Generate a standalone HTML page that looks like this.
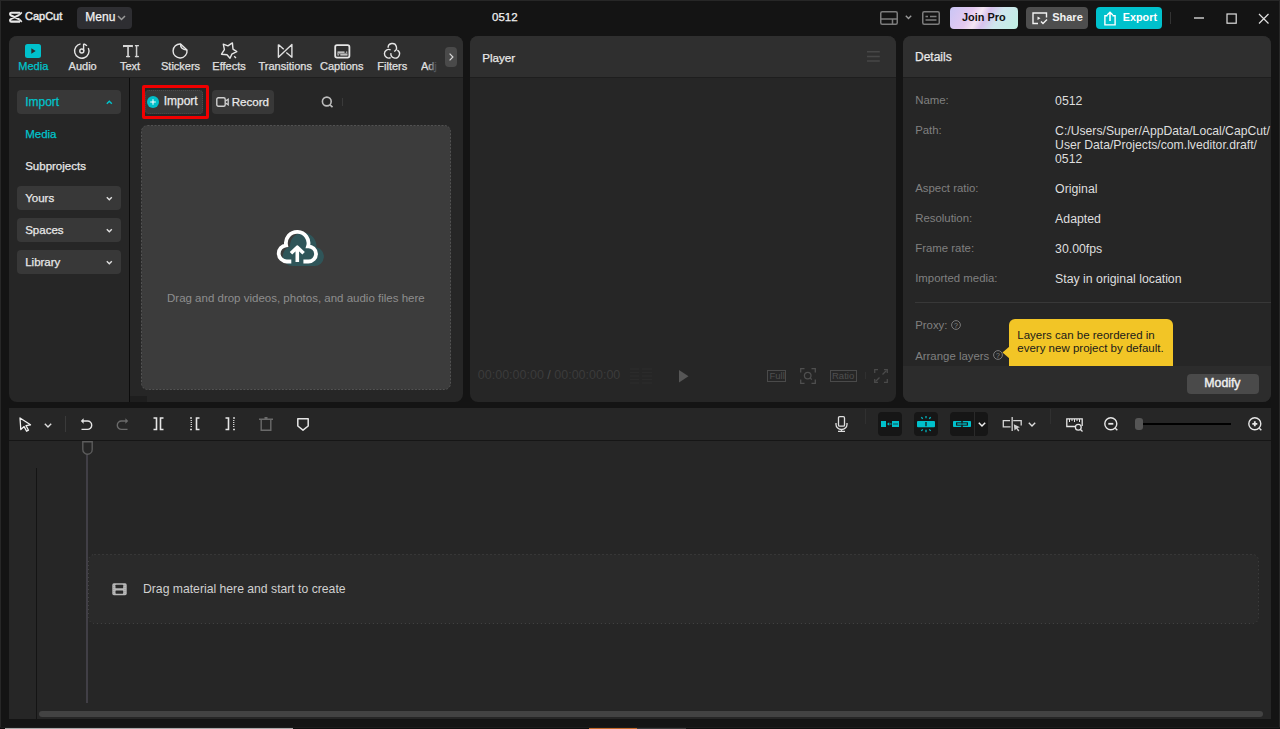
<!DOCTYPE html>
<html><head><meta charset="utf-8">
<style>
*{margin:0;padding:0;box-sizing:border-box}
html,body{width:1280px;height:729px;overflow:hidden;background:#141414;font-family:"Liberation Sans",sans-serif;color:#e0e0e0}
body{position:relative}
.a{position:absolute}
.t{position:absolute;white-space:nowrap;line-height:1}
svg{position:absolute;overflow:visible}
.med{-webkit-text-stroke:0.25px currentColor}
</style></head><body>
<div class="a" style="left:0px;top:0px;width:1280px;height:1px;background:#272727;"></div>
<div class="a" style="left:0px;top:0px;width:1px;height:728px;background:#272727;"></div>
<div class="a" style="left:1279px;top:0px;width:1px;height:728px;background:#272727;"></div>
<div class="a" style="left:0px;top:727px;width:1280px;height:1px;background:#1c1c1c;"></div>
<div class="a" style="left:0px;top:728px;width:1280px;height:1px;background:#0e0e0e;"></div>
<div class="a" style="left:5px;top:728px;width:288px;height:1px;background:#a8a8a8;"></div>
<div class="a" style="left:589px;top:728px;width:48px;height:1px;background:#c46a2a;"></div>
<div class="a" style="left:637px;top:728px;width:49px;height:1px;background:#3a3a3a;"></div>
<svg style="left:9px;top:11px;" width="14" height="12" viewBox="0 0 14 12"><path d="M11 1.8 H2.3 Q1.1 1.8 1.1 3 V3.3 Q1.1 4.1 2.1 4.5 L10.3 8.3 M10.3 3.9 L2.1 7.9 Q1.1 8.3 1.1 9.1 V9.4 Q1.1 10.6 2.3 10.6 H11" fill="none" stroke="#e8e8e8" stroke-width="2.1"/><path d="M10.3 3.9 L12.8 1.4 M10.3 8.3 L12.8 10.8" stroke="#e8e8e8" stroke-width="1.7"/></svg>
<div class="t " style="left:25px;top:11px;font-size:11px;color:#e8e8e8;font-weight:400;-webkit-text-stroke:0.45px #e8e8e8">CapCut</div>
<div class="a" style="left:77px;top:7px;width:55px;height:22px;background:#2e2e32;border-radius:4px"></div>
<div class="t med" style="left:85.3px;top:11px;font-size:12px;color:#f2f2f2;font-weight:400;">Menu</div>
<svg style="left:117px;top:15px;" width="9" height="6" viewBox="0 0 9 6"><path d="M1 1 L4.5 4.5 L8 1" fill="none" stroke="#9a9a9a" stroke-width="1.5"/></svg>
<div class="t med" style="left:492px;top:12px;font-size:11.5px;color:#f2f2f2;font-weight:400;">0512</div>
<svg style="left:880px;top:11px;" width="18" height="14" viewBox="0 0 18 14"><rect x="0.75" y="0.75" width="16.5" height="12.5" rx="1.5" fill="none" stroke="#7c7c7c" stroke-width="1.5"/><path d="M0.75 8 H17.25 M12.5 8 V13.25" stroke="#7c7c7c" stroke-width="1.5"/></svg>
<svg style="left:904.5px;top:14.5px;" width="7" height="5" viewBox="0 0 7 5"><path d="M0.8 0.8 L3.5 3.5 L6.2 0.8" fill="none" stroke="#9a9a9a" stroke-width="1.4"/></svg>
<svg style="left:922px;top:11px;" width="18" height="14" viewBox="0 0 18 14"><rect x="0.75" y="0.75" width="16.5" height="12.5" rx="1.5" fill="none" stroke="#7c7c7c" stroke-width="1.5"/><path d="M3.5 5.5 H6 M8 5.5 H14.5 M3.5 9 H14.5" stroke="#7c7c7c" stroke-width="1.5"/></svg>
<div class="a" style="left:950px;top:7px;width:68px;height:22px;background:linear-gradient(120deg,#c9c5f5 0%,#e4c9f0 30%,#f4e6f4 42%,#d8c2ee 52%,#cfe6ee 68%,#bff0e3 100%);border-radius:4px"></div>
<div class="t " style="left:962px;top:12px;font-size:10.9px;color:#111111;font-weight:700;">Join Pro</div>
<div class="a" style="left:1026px;top:7px;width:62px;height:22px;background:#4e4e4e;border-radius:4px"></div>
<svg style="left:1032px;top:12px;" width="17" height="13" viewBox="0 0 17 13"><path d="M6 11.5 H1 V1 H14.5 V5.5" fill="none" stroke="#f2f2f2" stroke-width="1.4"/><path d="M5.5 4.5 L8.5 6.3 L5.5 8.1 Z" fill="#f2f2f2"/><path d="M9 9.5 L11 11.5 L15 7.5" fill="none" stroke="#f2f2f2" stroke-width="1.4"/></svg>
<div class="t " style="left:1052.2px;top:12px;font-size:11px;color:#f2f2f2;font-weight:700;">Share</div>
<div class="a" style="left:1096px;top:7px;width:66px;height:22px;background:#00c1cc;border-radius:4px"></div>
<svg style="left:1104px;top:10.5px;" width="12" height="15" viewBox="0 0 12 15"><path d="M3.5 4.8 H0.9 V13.9 H11.1 V4.8 H8.5" fill="none" stroke="#ffffff" stroke-width="1.4"/><path d="M6 10 V1.5 M3.2 4 L6 1.2 L8.8 4" fill="none" stroke="#ffffff" stroke-width="1.5"/></svg>
<div class="t " style="left:1122.8px;top:12px;font-size:10.8px;color:#ffffff;font-weight:700;">Export</div>
<div class="a" style="left:1170px;top:12px;width:1px;height:12px;background:#333333;"></div>
<div class="a" style="left:1194px;top:17px;width:10px;height:2px;background:#9a9a9a;"></div>
<svg style="left:1225.5px;top:12.5px;" width="11" height="11" viewBox="0 0 11 11"><rect x="1" y="1" width="9.2" height="9.2" fill="none" stroke="#e0e0e0" stroke-width="1.2"/></svg>
<svg style="left:1257.5px;top:12.5px;" width="11" height="11" viewBox="0 0 11 11"><path d="M1 1 L10.5 10.5 M10.5 1 L1 10.5" stroke="#e0e0e0" stroke-width="1.2"/></svg>
<div class="a" style="left:9px;top:36px;width:454px;height:366px;background:#262626;border-radius:8px;overflow:hidden">
<div class="a" style="left:0px;top:0px;width:454px;height:41px;background:#2f2f2f;"></div>
<div class="a" style="left:0px;top:41px;width:454px;height:1px;background:#1e1e1e;"></div>
</div>
<div class="a" style="left:25px;top:44px;width:16px;height:14px;background:#00c1cc;border-radius:2.5px"></div>
<svg style="left:25px;top:44px;" width="16" height="14" viewBox="0 0 16 14"><path d="M6.3 4.3 L10.7 7 L6.3 9.7 Z" fill="#2b2b2b"/></svg>
<div class="t med" style="left:18.3px;top:61px;font-size:11px;color:#00c4cc;font-weight:400;">Media</div>
<svg style="left:74px;top:43px;" width="16" height="16" viewBox="0 0 16 16"><path d="M6.55 0.91 A7.2 7.2 0 1 0 14.33 4.96" fill="none" stroke="#e6e6e6" stroke-width="1.4"/><path d="M9.6 0.85 A7.2 7.2 0 0 1 12.9 2.9" fill="none" stroke="#e6e6e6" stroke-width="1.4"/><path d="M9.6 0.85 V8" fill="none" stroke="#e6e6e6" stroke-width="1.4"/><circle cx="7.8" cy="8" r="2" fill="none" stroke="#e6e6e6" stroke-width="1.4"/></svg>
<div class="t med" style="left:68.6px;top:61px;font-size:11px;color:#e0e0e0;font-weight:400;">Audio</div>
<svg style="left:122px;top:44px;" width="18" height="14" viewBox="0 0 18 14"><g fill="#d6d6d6"><path d="M1 1 H10.9 V3.4 L10.2 2.9 H1.7 L1 3.4 Z"/><rect x="5.1" y="2.9" width="1.9" height="10.3" fill="#bdbdbd"/><rect x="4" y="11.9" width="4.1" height="1.3"/><rect x="13.8" y="1" width="1.5" height="12.2" fill="#cfcfcf"/><rect x="12.9" y="1" width="4" height="1.3"/><rect x="12.9" y="11.9" width="4" height="1.3"/></g></svg>
<div class="t med" style="left:120px;top:61px;font-size:11px;color:#e0e0e0;font-weight:400;">Text</div>
<svg style="left:172px;top:43px;" width="17" height="16" viewBox="0 0 17 16"><path d="M8.6 1 A7 7 0 1 0 15 7 Z" fill="none" stroke="#e6e6e6" stroke-width="1.4" stroke-linejoin="round"/><path d="M8.6 1 Q8.2 6.6 15 7" fill="none" stroke="#e6e6e6" stroke-width="1.4"/></svg>
<div class="t med" style="left:161px;top:61px;font-size:11px;color:#e0e0e0;font-weight:400;">Stickers</div>
<svg style="left:221px;top:42px;" width="17" height="17" viewBox="0 0 17 17"><path d="M2.3 2.2 L6.9 3.9 L11.4 0.9 L12 7.1 L15.8 9.6 L10.8 12.2 L9 16.3 L6 12.8 L0.5 12.2 L3.4 7.7 Z" fill="none" stroke="#e6e6e6" stroke-width="1.4" stroke-linejoin="round"/><path d="M13.2 14.2 L15 16" stroke="#e6e6e6" stroke-width="1.3"/></svg>
<div class="t med" style="left:212.3px;top:61px;font-size:11px;color:#e0e0e0;font-weight:400;">Effects</div>
<svg style="left:277px;top:43px;" width="16" height="16" viewBox="0 0 16 16"><path d="M1.4 1.5 V14.2 L14.9 1.5 V14.2 L9.3 9.5 M1.4 1.5 L6.7 6.2" fill="none" stroke="#e0e0e0" stroke-width="1.4" stroke-linejoin="round"/></svg>
<div class="t med" style="left:258.5px;top:61px;font-size:11px;color:#e0e0e0;font-weight:400;">Transitions</div>
<svg style="left:333.5px;top:43.5px;" width="17" height="15" viewBox="0 0 17 15"><rect x="1.2" y="1.2" width="14.2" height="12.4" rx="1.8" fill="none" stroke="#e6e6e6" stroke-width="1.8"/><rect x="3" y="8.8" width="10.5" height="1.5" fill="#8a8a8a"/><path d="M3.5 8.2 H10.5 M12.2 8.2 H13.2 M3.5 10.9 H4.8 M6.3 10.9 H13.5" stroke="#e6e6e6" stroke-width="1.2"/></svg>
<div class="t med" style="left:320px;top:61px;font-size:11px;color:#e0e0e0;font-weight:400;">Captions</div>
<svg style="left:384px;top:43px;" width="17" height="17" viewBox="0 0 17 17"><path d="M4.1 4.7 A4.2 4.2 0 1 1 10.14 8.47" fill="none" stroke="#e6e6e6" stroke-width="1.4"/><path d="M6.63 6.89 A4.3 4.3 0 1 0 6.63 14.6" fill="none" stroke="#e6e6e6" stroke-width="1.4"/><path d="M6.95 10.08 A4.3 4.3 0 1 0 13.35 7.03" fill="none" stroke="#e6e6e6" stroke-width="1.4"/></svg>
<div class="t med" style="left:377.3px;top:61px;font-size:11px;color:#e0e0e0;font-weight:400;">Filters</div>
<div class="a" style="left:421px;top:58px;width:20px;height:16px;overflow:hidden">
<div class="t med" style="left:0px;top:3px;font-size:11px;color:#e0e0e0;font-weight:400;">Adjustment</div>
</div>
<div class="a" style="left:428px;top:58px;width:17px;height:16px;background:linear-gradient(90deg,rgba(47,47,47,0),#2f2f2f 55%);"></div>
<div class="a" style="left:445px;top:47px;width:12px;height:20px;background:#4a4a4a;border-radius:4px"></div>
<svg style="left:447px;top:52px;" width="8" height="10" viewBox="0 0 8 10"><path d="M2.6 1.7 L5.9 5 L2.6 8.3" fill="none" stroke="#d8d8d8" stroke-width="1.2"/></svg>
<div class="a" style="left:129px;top:78px;width:1px;height:324px;background:#0c0c0c;"></div>
<div class="a" style="left:130px;top:396px;width:17px;height:6px;background:#1e1e1e;"></div>
<div class="a" style="left:17px;top:90px;width:104px;height:24px;background:#383838;border-radius:4px"></div>
<div class="t med" style="left:25.2px;top:96px;font-size:12px;color:#00c4cc;font-weight:400;">Import</div>
<svg style="left:105.5px;top:99.5px;" width="7" height="5" viewBox="0 0 7 5"><path d="M0.8 3.8 L3.3 1.2 L5.8 3.8" fill="none" stroke="#00c4cc" stroke-width="1.4"/></svg>
<div class="t med" style="left:25.2px;top:129px;font-size:11.5px;color:#00c4cc;font-weight:400;">Media</div>
<div class="t med" style="left:25.2px;top:161px;font-size:11.5px;color:#e8e8e8;font-weight:400;">Subprojects</div>
<div class="a" style="left:17px;top:186px;width:104px;height:24px;background:#383838;border-radius:4px"></div>
<div class="t med" style="left:25.2px;top:193px;font-size:11.5px;color:#e8e8e8;font-weight:400;">Yours</div>
<svg style="left:105.5px;top:195.5px;" width="7" height="5" viewBox="0 0 7 5"><path d="M0.8 1.2 L3.3 3.8 L5.8 1.2" fill="none" stroke="#e0e0e0" stroke-width="1.4"/></svg>
<div class="a" style="left:17px;top:218px;width:104px;height:24px;background:#383838;border-radius:4px"></div>
<div class="t med" style="left:25.2px;top:225px;font-size:11.5px;color:#e8e8e8;font-weight:400;">Spaces</div>
<svg style="left:105.5px;top:227.5px;" width="7" height="5" viewBox="0 0 7 5"><path d="M0.8 1.2 L3.3 3.8 L5.8 1.2" fill="none" stroke="#e0e0e0" stroke-width="1.4"/></svg>
<div class="a" style="left:17px;top:250px;width:104px;height:24px;background:#383838;border-radius:4px"></div>
<div class="t med" style="left:25.2px;top:257px;font-size:11.5px;color:#e8e8e8;font-weight:400;">Library</div>
<svg style="left:105.5px;top:259.5px;" width="7" height="5" viewBox="0 0 7 5"><path d="M0.8 1.2 L3.3 3.8 L5.8 1.2" fill="none" stroke="#e0e0e0" stroke-width="1.4"/></svg>
<div class="a" style="left:145px;top:90px;width:58px;height:24px;background:#383838;border-radius:4px;outline:1px dotted #4c4c4c;outline-offset:-1px"></div>
<svg style="left:146.5px;top:95.8px;" width="12" height="12" viewBox="0 0 12 12"><circle cx="6" cy="6" r="6" fill="#00bfca"/><path d="M6 3.2 V8.8 M3.2 6 H8.8" stroke="#ffffff" stroke-width="1.05"/></svg>
<div class="t med" style="left:163.7px;top:95px;font-size:12px;color:#eaeaea;font-weight:400;">Import</div>
<div class="a" style="left:142px;top:85px;width:67px;height:34px;background:transparent;border:3px solid #f00000;border-radius:2px"></div>
<div class="a" style="left:212px;top:90px;width:62px;height:24px;background:#383838;border-radius:4px"></div>
<svg style="left:216px;top:97px;" width="13" height="10" viewBox="0 0 13 10"><rect x="0.8" y="0.8" width="8.4" height="8.4" rx="1.5" fill="none" stroke="#cfcfcf" stroke-width="1.4"/><path d="M9.5 4 L12.2 2.2 V7.8 L9.5 6" fill="none" stroke="#cfcfcf" stroke-width="1.3"/></svg>
<div class="t med" style="left:231.7px;top:96px;font-size:11.6px;color:#eaeaea;font-weight:400;">Record</div>
<svg style="left:321px;top:96px;" width="13" height="12" viewBox="0 0 13 12"><circle cx="5.8" cy="5.5" r="4.4" fill="none" stroke="#bdbdbd" stroke-width="1.6"/><path d="M9 8.8 L11.5 11.2" stroke="#bdbdbd" stroke-width="1.6"/></svg>
<div class="a" style="left:342px;top:98px;width:1px;height:8px;background:#3a3a3a;"></div>
<svg style="left:141px;top:125px;" width="310" height="265" viewBox="0 0 310 265"><rect x="0.5" y="0.5" width="309" height="264" rx="6" fill="#3c3c3c" stroke="#525252" stroke-width="1" stroke-dasharray="2 1.5"/></svg>
<svg style="left:276px;top:229px;" width="50" height="40" viewBox="0 0 50 40"><path d="M16.80 37.10 A10 10 0 0 1 14.02 17.49 A13.2 13.2 0 1 1 40.32 18.30 A9.5 9.5 0 0 1 38.40 37.10 Z" fill="#2f5559"/><path d="M15.30 32.50 H10.80 A8.1 8.1 0 0 1 10.12 16.33 A11.3 11.3 0 1 1 32.03 17.31 A7.6 7.6 0 1 1 32.40 32.50 H27.40" fill="none" stroke="#ffffff" stroke-width="3.8"/><path d="M21.3 33 V19 M15 24.2 L21.3 18.2 L27.6 24.2" fill="none" stroke="#ffffff" stroke-width="3.6" stroke-linejoin="round"/></svg>
<div class="t " style="left:167px;top:293px;font-size:11.5px;color:#8e8e8e;font-weight:400;">Drag and drop videos, photos, and audio files here</div>
<div class="a" style="left:470px;top:36px;width:426px;height:366px;background:#262626;border-radius:8px;overflow:hidden">
<div class="a" style="left:0px;top:0px;width:426px;height:41px;background:#2f2f2f;"></div>
<div class="a" style="left:0px;top:41px;width:426px;height:1px;background:#1e1e1e;"></div>
</div>
<div class="t med" style="left:482.2px;top:52px;font-size:11.6px;color:#e8e8e8;font-weight:400;">Player</div>
<svg style="left:866.5px;top:50.8px;" width="13" height="11" viewBox="0 0 13 11"><path d="M0 0.8 H12.8 M0 5.5 H12.8 M0 10.1 H12.8" stroke="#474747" stroke-width="1.5"/></svg>
<div class="t " style="left:477.8px;top:369px;font-size:12.5px;color:#3b3b3b;font-weight:400;">00:00:00:00 <span style="color:#4a4a4a">/</span> 00:00:00:00</div>
<svg style="left:630px;top:368px;" width="22" height="16" viewBox="0 0 22 16"><path d="M0 1 H9 M0 4.5 H9 M0 8 H9 M0 11.5 H9 M0 15 H9 M12 1 H22 M12 4.5 H22 M12 8 H22 M12 11.5 H22 M12 15 H22" stroke="#2b2b2b" stroke-width="1.6"/></svg>
<svg style="left:679px;top:369.5px;" width="10" height="13" viewBox="0 0 10 13"><path d="M0 0 L9.5 6.3 L0 12.6 Z" fill="#565656"/></svg>
<svg style="left:767px;top:370px;" width="19" height="12" viewBox="0 0 19 12"><rect x="0.5" y="0.5" width="18" height="11" fill="none" stroke="#4a4a4a" stroke-width="1"/></svg>
<div class="t " style="left:769.5px;top:371px;font-size:9.5px;color:#4f4f4f;font-weight:400;">Full</div>
<svg style="left:800px;top:368px;" width="16" height="16" viewBox="0 0 16 16"><path d="M0.7 4.5 V0.7 H4.5 M11.5 0.7 H15.3 V4.5 M15.3 11.5 V15.3 H11.5 M4.5 15.3 H0.7 V11.5" fill="none" stroke="#4f4f4f" stroke-width="1.3"/><circle cx="7.7" cy="7.6" r="3.3" fill="none" stroke="#4f4f4f" stroke-width="1.3"/><path d="M10.2 10 L11.8 11.6" stroke="#4f4f4f" stroke-width="1.3"/></svg>
<svg style="left:830px;top:370px;" width="27" height="12" viewBox="0 0 27 12"><rect x="0.5" y="0.5" width="26" height="11" fill="none" stroke="#4a4a4a" stroke-width="1"/></svg>
<div class="t " style="left:832px;top:371px;font-size:9.5px;color:#4f4f4f;font-weight:400;">Ratio</div>
<div class="a" style="left:865px;top:372px;width:1px;height:7px;background:#303030;"></div>
<svg style="left:874px;top:369px;" width="14" height="14" viewBox="0 0 14 14"><path d="M0.7 4 V0.7 H4 M10 0.7 H13.3 V4 M13.3 10 V13.3 H10 M4 13.3 H0.7 V10" fill="none" stroke="#4a4a4a" stroke-width="1.3"/><path d="M12.5 1.5 L8.5 5.5 M1.5 12.5 L5.5 8.5" stroke="#4a4a4a" stroke-width="1.3"/></svg>
<div class="a" style="left:903px;top:36px;width:368px;height:366px;background:#262626;border-radius:8px;overflow:hidden">
<div class="a" style="left:0px;top:0px;width:368px;height:41px;background:#2f2f2f;"></div>
<div class="a" style="left:0px;top:41px;width:368px;height:1px;background:#1e1e1e;"></div>
<div class="a" style="left:0px;top:330px;width:368px;height:36px;background:#2c2c2c;"></div>
</div>
<div class="t med" style="left:915px;top:51px;font-size:12px;color:#e8e8e8;font-weight:400;">Details</div>
<div class="t " style="left:915.2px;top:95px;font-size:11.4px;color:#808080;font-weight:400;">Name:</div>
<div class="t " style="left:1055.1px;top:95px;font-size:12.3px;color:#dedede;font-weight:400;">0512</div>
<div class="t " style="left:915.2px;top:125px;font-size:11.4px;color:#808080;font-weight:400;">Path:</div>
<div class="t " style="left:1055.1px;top:125px;font-size:12.2px;color:#dedede;font-weight:400;">C:/Users/Super/AppData/Local/CapCut/</div>
<div class="t " style="left:1055.1px;top:139px;font-size:12.2px;color:#dedede;font-weight:400;">User Data/Projects/com.lveditor.draft/</div>
<div class="t " style="left:1055.1px;top:153px;font-size:12.2px;color:#dedede;font-weight:400;">0512</div>
<div class="t " style="left:915.2px;top:183px;font-size:11.4px;color:#808080;font-weight:400;">Aspect ratio:</div>
<div class="t " style="left:1055.1px;top:183px;font-size:12.3px;color:#dedede;font-weight:400;">Original</div>
<div class="t " style="left:915.2px;top:213px;font-size:11.4px;color:#808080;font-weight:400;">Resolution:</div>
<div class="t " style="left:1055.1px;top:213px;font-size:12.3px;color:#dedede;font-weight:400;">Adapted</div>
<div class="t " style="left:915.2px;top:243px;font-size:11.4px;color:#808080;font-weight:400;">Frame rate:</div>
<div class="t " style="left:1055.1px;top:243px;font-size:12.3px;color:#dedede;font-weight:400;">30.00fps</div>
<div class="t " style="left:915.2px;top:273px;font-size:11.4px;color:#808080;font-weight:400;">Imported media:</div>
<div class="t " style="left:1055.1px;top:273px;font-size:12.3px;color:#dedede;font-weight:400;">Stay in original location</div>
<div class="a" style="left:915px;top:302px;width:356px;height:1px;background:#383838;"></div>
<div class="t " style="left:915.2px;top:320px;font-size:11.4px;color:#808080;font-weight:400;">Proxy:</div>
<svg style="left:951px;top:320.3px;" width="10" height="10" viewBox="0 0 10 10"><circle cx="5" cy="5" r="4.4" fill="none" stroke="#7a7a7a" stroke-width="1"/><text x="5" y="7.6" font-size="7" text-anchor="middle" fill="#8a8a8a" font-family="Liberation Sans">?</text></svg>
<div class="t " style="left:915.2px;top:351px;font-size:11.4px;color:#808080;font-weight:400;">Arrange layers</div>
<svg style="left:993px;top:350px;" width="10" height="10" viewBox="0 0 10 10"><circle cx="5" cy="5" r="4.4" fill="none" stroke="#7a7a7a" stroke-width="1"/><text x="5" y="7.6" font-size="7" text-anchor="middle" fill="#8a8a8a" font-family="Liberation Sans">?</text></svg>
<div class="a" style="left:1002px;top:319px;width:172px;height:47px;overflow:hidden">
<div class="a" style="left:7px;top:0px;width:164px;height:60px;background:#f2c526;border-radius:6px"></div>
<svg style="left:0px;top:26.5px;" width="8" height="13" viewBox="0 0 8 13"><path d="M8 0 L0.5 6.5 L8 13 Z" fill="#f2c526"/></svg>
<div class="t " style="left:15.3px;top:11px;font-size:11.5px;color:#1a1a1a;font-weight:400;">Layers can be reordered in</div>
<div class="t " style="left:15.3px;top:24px;font-size:11.5px;color:#1a1a1a;font-weight:400;">every new project by default.</div>
</div>
<div class="a" style="left:1187px;top:374px;width:72px;height:20px;background:#4a4a4a;border-radius:4px"></div>
<div class="t " style="left:1204.3px;top:377px;font-size:12.3px;color:#f0f0f0;font-weight:400;-webkit-text-stroke:0.4px #f0f0f0">Modify</div>
<div class="a" style="left:9px;top:408px;width:1262px;height:311px;background:#262626;"></div>
<div class="a" style="left:9px;top:440px;width:1262px;height:1px;background:#161616;"></div>
<svg style="left:19px;top:416.5px;" width="13" height="16" viewBox="0 0 13 16"><path d="M1 1 L11.5 7.8 L7 8.6 L9.5 13.2 L7.6 14.2 L5.1 9.6 L1.8 12.5 Z" fill="none" stroke="#f0f0f0" stroke-width="1.3" stroke-linejoin="round"/></svg>
<svg style="left:43.5px;top:422.5px;" width="8" height="5" viewBox="0 0 8 5"><path d="M0.8 0.8 L4 4 L7.2 0.8" fill="none" stroke="#dddddd" stroke-width="1.4"/></svg>
<div class="a" style="left:65px;top:416px;width:1px;height:15.5px;background:#3a3a3a;"></div>
<svg style="left:80px;top:417px;" width="13" height="13" viewBox="0 0 13 13"><path d="M2.5 4 H7.5 A4.2 4.2 0 0 1 7.5 12.4 H1.5" fill="none" stroke="#e6e6e6" stroke-width="1.4"/><path d="M0.8 4 L3.6 1.2 V6.8 Z" fill="#e6e6e6"/></svg>
<svg style="left:115.5px;top:417px;" width="13" height="13" viewBox="0 0 13 13"><path d="M10.5 4 H5.5 A4.2 4.2 0 0 0 5.5 12.4 H11.5" fill="none" stroke="#6a6a6a" stroke-width="1.4"/><path d="M12.2 4 L9.4 1.2 V6.8 Z" fill="#6a6a6a"/></svg>
<svg style="left:152.5px;top:417px;" width="11" height="14" viewBox="0 0 11 14"><path d="M0.5 1 H3.5 V12.5 H0.5 M10.5 1 H7.5 V12.5 H10.5" fill="none" stroke="#e6e6e6" stroke-width="1.6"/></svg>
<svg style="left:188.5px;top:417px;" width="11" height="14" viewBox="0 0 11 14"><path d="M1 1 H3 M1 12.5 H3" stroke="#cfcfcf" stroke-width="1.4"/><path d="M2.3 3 V10.5" stroke="#cfcfcf" stroke-width="1.4" stroke-dasharray="1 1"/><path d="M10.5 1 H7.5 V12.5 H10.5" fill="none" stroke="#e6e6e6" stroke-width="1.6"/></svg>
<svg style="left:224.5px;top:417px;" width="11" height="14" viewBox="0 0 11 14"><path d="M8 1 H10 M8 12.5 H10" stroke="#cfcfcf" stroke-width="1.4"/><path d="M8.7 3 V10.5" stroke="#cfcfcf" stroke-width="1.4" stroke-dasharray="1 1"/><path d="M0.5 1 H3.5 V12.5 H0.5" fill="none" stroke="#e6e6e6" stroke-width="1.6"/></svg>
<svg style="left:259px;top:416.5px;" width="14" height="14" viewBox="0 0 14 14"><path d="M0 2.2 H14 M5.5 0.8 H8.5" stroke="#6a6a6a" stroke-width="1.4"/><path d="M2.2 2.2 V13.2 H11.8 V2.2" fill="none" stroke="#6a6a6a" stroke-width="1.4"/></svg>
<svg style="left:297px;top:418px;" width="12" height="13" viewBox="0 0 12 13"><path d="M0.8 0.8 H11.2 V8 L6 12.2 L0.8 8 Z" fill="none" stroke="#e6e6e6" stroke-width="1.5" stroke-linejoin="round"/></svg>
<svg style="left:834.5px;top:416px;" width="13" height="16" viewBox="0 0 13 16"><rect x="3.5" y="0.7" width="6" height="9.5" rx="1.2" fill="none" stroke="#dedede" stroke-width="1.3"/><path d="M1 7 V8.5 A5.5 5 0 0 0 12 8.5 V7 M6.5 13.3 V15.5 M3 15.3 H10" fill="none" stroke="#dedede" stroke-width="1.3"/></svg>
<div class="a" style="left:865px;top:409px;width:1px;height:15px;background:#303030;"></div>
<div class="a" style="left:878px;top:412px;width:24px;height:24px;background:#161616;border-radius:4px"></div>
<div class="a" style="left:914px;top:412px;width:24px;height:24px;background:#161616;border-radius:4px"></div>
<div class="a" style="left:950px;top:412px;width:38px;height:24px;background:#161616;border-radius:4px"></div>
<div class="a" style="left:974px;top:412px;width:1px;height:24px;background:#2a2a2a;"></div>
<svg style="left:878px;top:412px;" width="24" height="24" viewBox="0 0 24 24"><rect x="3" y="9" width="5" height="6" fill="#00c1cc"/><path d="M9 12 L11.2 10.3 V13.7 Z" fill="#00c1cc"/><path d="M11.5 12 H13.5" stroke="#00a9b3" stroke-width="1.2"/><rect x="14" y="9" width="7" height="6" fill="#00c1cc"/><rect x="15" y="11.4" width="5" height="1.2" fill="#106068"/></svg>
<svg style="left:914px;top:412px;" width="24" height="24" viewBox="0 0 24 24"><rect x="3" y="9" width="18" height="6.2" rx="1" fill="#00c1cc"/><path d="M12 10 V14.2" stroke="#161616" stroke-width="1.3"/><path d="M12 4 V6.3 M7.3 5.3 L8.8 6.8 M16.7 5.3 L15.2 6.8 M12 17.8 V20.2 M7.3 18.9 L8.8 17.4 M16.7 18.9 L15.2 17.4" stroke="#00b5c0" stroke-width="1.3"/></svg>
<svg style="left:950px;top:412px;" width="24" height="24" viewBox="0 0 24 24"><rect x="3" y="9" width="8.4" height="6" rx="0.8" fill="#00c1cc"/><rect x="12.6" y="9" width="8.4" height="6" rx="0.8" fill="#00c1cc"/><rect x="6.6" y="10.9" width="10.8" height="2.2" fill="none" stroke="#161616" stroke-width="1.1"/><rect x="7.6" y="11.6" width="8.8" height="0.9" fill="#00a9b3"/></svg>
<svg style="left:977.5px;top:421.5px;" width="8" height="5" viewBox="0 0 8 5"><path d="M0.8 0.8 L4 4 L7.2 0.8" fill="none" stroke="#eeeeee" stroke-width="1.5"/></svg>
<svg style="left:1002px;top:416px;" width="21" height="16" viewBox="0 0 21 16"><path d="M8 4.7 H1.3 V10.9 H8.5 M11.2 4.7 H19.2 V9.5" fill="none" stroke="#d6d6d6" stroke-width="1.3"/><path d="M10.2 1 V15" stroke="#bdbdbd" stroke-width="1.5"/><path d="M11.8 8.2 L18 11.3 L15.4 12 L17.4 14.6 L16.2 15.4 L14.3 12.8 L12.5 14.6 Z" fill="#d0d0d0"/></svg>
<svg style="left:1028px;top:421.5px;" width="8" height="5" viewBox="0 0 8 5"><path d="M0.8 0.8 L4 4 L7.2 0.8" fill="none" stroke="#dddddd" stroke-width="1.4"/></svg>
<div class="a" style="left:1050px;top:409px;width:1px;height:15px;background:#303030;"></div>
<svg style="left:1065.5px;top:417.5px;" width="18" height="14" viewBox="0 0 18 14"><path d="M10 8.5 H0.8 V0.8 H16.2 V8" fill="none" stroke="#e6e6e6" stroke-width="1.3"/><path d="M3.5 1 V4 M6 1 V3 M8.5 1 V4 M11 1 V3 M13.5 1 V4" stroke="#e6e6e6" stroke-width="1"/><circle cx="12.3" cy="9.3" r="2.9" fill="#262626" stroke="#e6e6e6" stroke-width="1.3"/><path d="M14.5 11.5 L16.5 13.5" stroke="#e6e6e6" stroke-width="1.3"/></svg>
<svg style="left:1104px;top:417px;" width="15" height="15" viewBox="0 0 15 15"><circle cx="6.8" cy="6.8" r="6" fill="none" stroke="#e6e6e6" stroke-width="1.4"/><path d="M4.3 6.8 H9.3" stroke="#e6e6e6" stroke-width="1.8"/><path d="M11.3 11.3 L13.3 13.3" stroke="#e6e6e6" stroke-width="1.4"/></svg>
<div class="a" style="left:1135px;top:418px;width:8px;height:12px;background:#555555;border-radius:3px"></div>
<div class="a" style="left:1143px;top:422.8px;width:88px;height:2.2px;background:#000000;"></div>
<svg style="left:1248px;top:417px;" width="15" height="15" viewBox="0 0 15 15"><circle cx="6.8" cy="6.8" r="6" fill="none" stroke="#e6e6e6" stroke-width="1.4"/><path d="M4.3 6.8 H9.3 M6.8 4.3 V9.3" stroke="#e6e6e6" stroke-width="1.8"/><path d="M11.3 11.3 L13.3 13.3" stroke="#e6e6e6" stroke-width="1.4"/></svg>
<div class="a" style="left:36px;top:468px;width:1px;height:251px;background:#141414;"></div>
<div class="a" style="left:86px;top:454px;width:2px;height:249px;background:#413f46;"></div>
<svg style="left:82px;top:441px;" width="11" height="14" viewBox="0 0 11 14"><path d="M0.8 0.8 H10.2 V8.5 A4.7 4.7 0 0 1 0.8 8.5 Z" fill="none" stroke="#5c5c5c" stroke-width="1.4"/></svg>
<svg style="left:88px;top:554px;" width="1172" height="70" viewBox="0 0 1172 70"><rect x="0.5" y="0.5" width="1170" height="69" rx="6" fill="#2a2a2a" stroke="#464646" stroke-width="1" stroke-dasharray="1 3"/></svg>
<svg style="left:111.5px;top:582.5px;" width="15" height="13" viewBox="0 0 15 13"><rect x="0.3" y="0.3" width="14.4" height="11.9" rx="1.6" fill="#b9b9b9"/><rect x="3.5" y="1.7" width="7.7" height="3.6" rx="0.6" fill="#2a2a2a"/><rect x="3.5" y="7.4" width="7.7" height="3.3" rx="0.6" fill="#2a2a2a"/><path d="M1.8 2 V10.5 M12.9 2 V10.5" stroke="#8a8a8a" stroke-width="0.8" stroke-dasharray="0.8 1.2"/></svg>
<div class="t " style="left:143px;top:583px;font-size:12.2px;color:#d0d0d0;font-weight:400;">Drag material here and start to create</div>
<div class="a" style="left:39px;top:711px;width:1224px;height:6px;background:#434343;border-radius:3px"></div>
</body></html>
